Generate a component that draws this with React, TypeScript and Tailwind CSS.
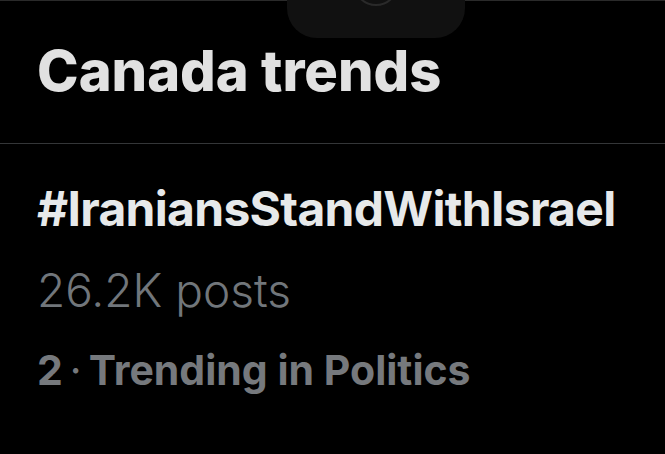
export default function App() {
  return (
    <div className="relative h-[454px] w-[665px] overflow-hidden bg-black font-['Inter',sans-serif]">
      {/* camera cutout at the top of the phone screenshot */}
      <div className="absolute left-[287px] top-0 h-[38px] w-[178px] overflow-hidden rounded-b-[30px] bg-[#111111]">
        <div className="mx-auto -mt-[40px] h-[46px] w-[46px] rounded-full border-2 border-[#2a2a2a]" />
      </div>
      <div className="h-px w-full bg-[#2a2a2a]" />

      <h1 className="ml-[37px] mt-[42px] text-[56px] font-extrabold leading-[56px] text-[#e1e1e1]">
        Canada trends
      </h1>

      <div className="mt-[44px] h-px w-full bg-[#343638]" />

      <div className="px-[37px]">
        <div className="mt-[41px] text-[48px] font-bold leading-[48px] tracking-[-0.7px] text-[#e7e9ea]">
          #IraniansStandWithIsrael
        </div>
        <div className="mt-[34px] text-[46px] font-light leading-[46px] text-[#71767b]">
          26.2K posts
        </div>
        <div className="mt-[37px] text-[41px] font-bold leading-[41px] text-[#76797d]">
          2<span className="mx-[7px] font-normal">·</span>Trending in Politics
        </div>
      </div>
    </div>
  );
}
